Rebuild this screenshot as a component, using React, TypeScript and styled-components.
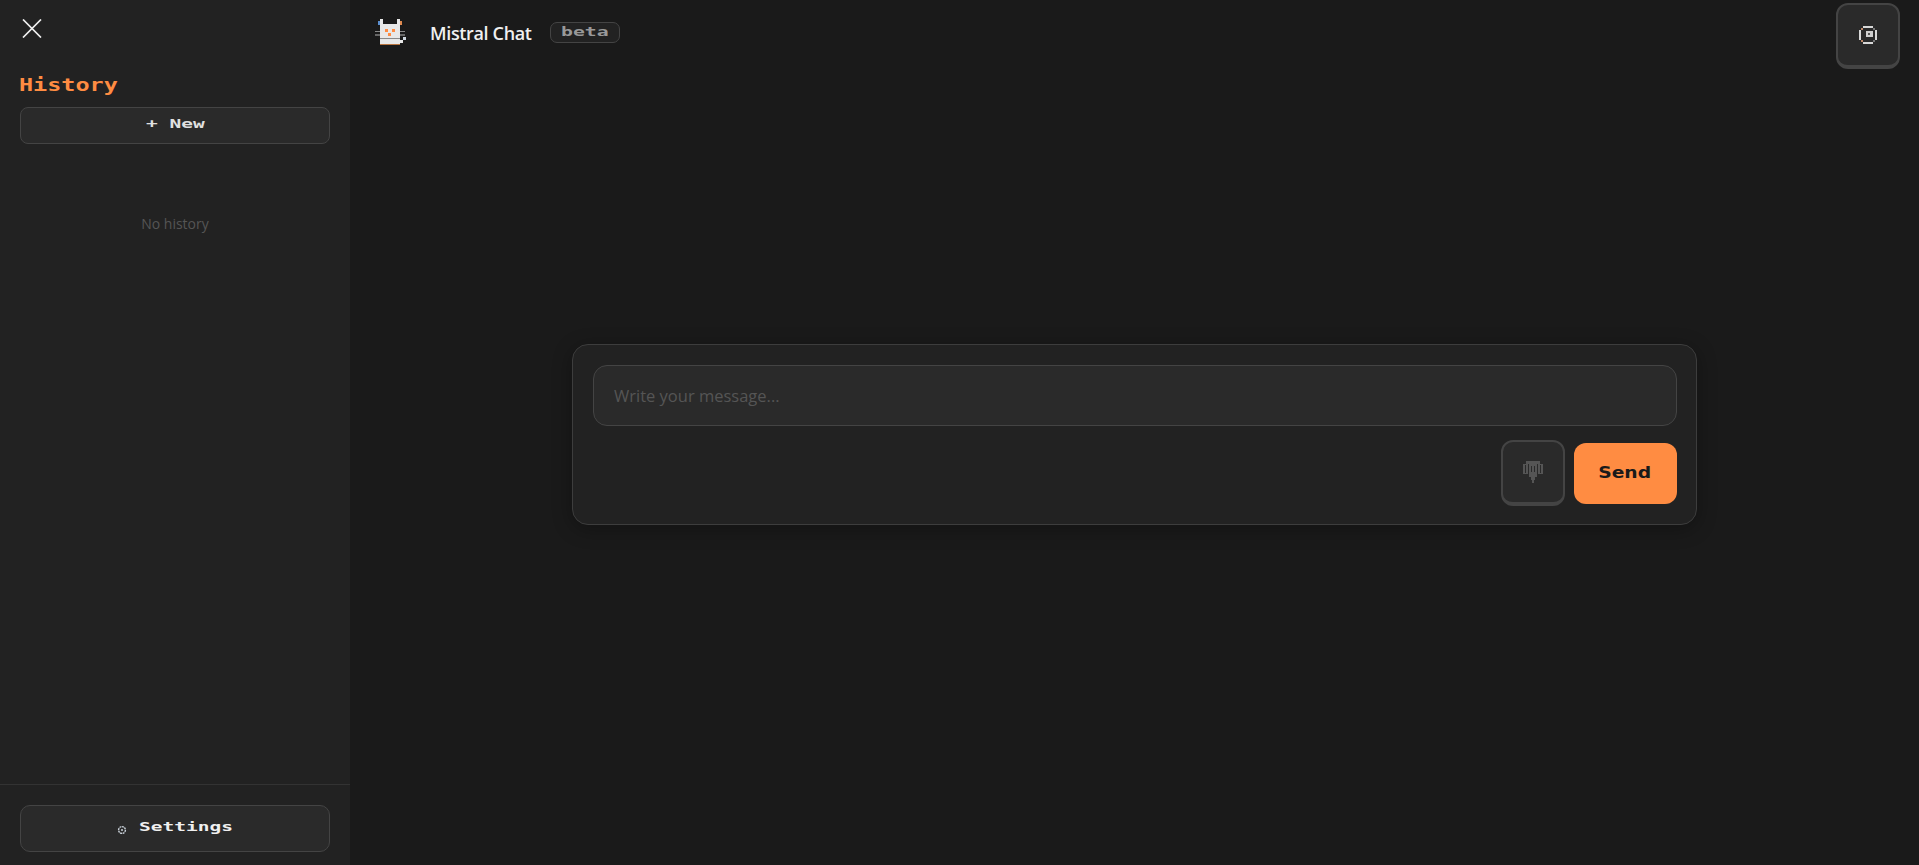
import React from 'react';
import styled, { createGlobalStyle } from 'styled-components';

const pixelFont = `"DejaVu Sans Mono", "Liberation Mono", monospace`;
const bodyFont = `"Open Sans", "Noto Sans", sans-serif`;

const GlobalStyle = createGlobalStyle`
  html, body {
    margin: 0;
    height: 100%;
    background: #1a1a1a;
  }
  * {
    box-sizing: border-box;
  }
`;

const Shell = styled.div`
  display: flex;
  width: 100%;
  height: 865px;
  overflow: hidden;
  font-family: ${bodyFont};
`;

const Sidebar = styled.aside`
  width: 350px;
  flex-shrink: 0;
  display: flex;
  flex-direction: column;
  background: #222222;
`;

const SidebarTop = styled.div`
  flex: 1;
  padding: 19px 20px 0;
  display: flex;
  flex-direction: column;
`;

const CloseButton = styled.button`
  width: 22px;
  height: 19px;
  margin-bottom: 36px;
  padding: 0;
  border: none;
  background: none;
  color: #f0f0f0;
  display: block;
`;

// wide bitmap-style lettering: a mono face stretched sideways
const PixelText = styled.span<{ $size: number; $stretch: number; $chars: number }>`
  display: inline-block;
  font-family: ${pixelFont};
  font-weight: 700;
  font-size: ${(p) => p.$size}px;
  transform: scaleX(${(p) => p.$stretch});
  transform-origin: left center;
  margin-right: calc(${(p) => p.$chars}ch * ${(p) => p.$stretch - 1});
  white-space: pre;
`;

const HistoryTitle = styled.h2`
  margin: 0 0 11px -1px;
  font-size: 17px;
  line-height: 22px;
  font-weight: 700;
  color: #ff8c42;
`;

const SideButton = styled.button<{ $tall?: boolean }>`
  width: 100%;
  height: ${(p) => (p.$tall ? '47px' : '37px')};
  display: flex;
  align-items: center;
  justify-content: center;
  gap: ${(p) => (p.$tall ? '12px' : '0')};
  background: #2a2a2a;
  border: 1px solid #444444;
  border-radius: ${(p) => (p.$tall ? '10px' : '8px')};
  color: ${(p) => (p.$tall ? '#f0f0f0' : '#e0e0e0')};
  padding: 0 0 4px;
`;

const EmptyNote = styled.p`
  margin: 70px 0 0;
  text-align: center;
  font-size: 14px;
  line-height: 20px;
  color: #555555;
`;

const SidebarBottom = styled.div`
  border-top: 1px solid #333333;
  padding: 20px 20px 13px;
`;

const Main = styled.main`
  flex: 1;
  display: flex;
  flex-direction: column;
  min-width: 0;
`;

const Header = styled.header`
  height: 69px;
  padding: 3px 19px 0 25px;
  display: flex;
  align-items: flex-start;
  justify-content: space-between;
`;

const Brand = styled.div`
  display: flex;
  align-items: center;
  height: 58px;
`;

const AppTitle = styled.h1`
  margin: 0 18px 0 24px;
  font-size: 18px;
  line-height: 24px;
  font-weight: 600;
  letter-spacing: -0.35px;
  color: #f0f0f0;
  position: relative;
  top: 1px;
`;

const BetaBadge = styled.span`
  width: 70px;
  height: 21px;
  display: flex;
  align-items: center;
  justify-content: center;
  border: 1px solid #444444;
  border-radius: 7px;
  background: #222222;
  color: #999999;
  padding-bottom: 1px;
`;

const KeyButton = styled.button`
  width: 64px;
  height: 66px;
  flex-shrink: 0;
  display: flex;
  align-items: center;
  justify-content: center;
  padding: 0;
  background: #2a2a2a;
  border: 2px solid #444444;
  border-bottom-width: 4px;
  border-radius: 12px;
`;

const Stage = styled.div`
  flex: 1;
  display: flex;
  align-items: center;
  justify-content: center;
  padding-bottom: 65px;
`;

const Composer = styled.form`
  width: 1125px;
  height: 181px;
  padding: 20px 19px 0 20px;
  display: flex;
  flex-direction: column;
  background: #222222;
  border: 1px solid #3d3d3d;
  border-radius: 16px;
  box-shadow: 0 4px 20px rgba(0, 0, 0, 0.3);
`;

const MessageInput = styled.input`
  width: 100%;
  height: 61px;
  flex-shrink: 0;
  padding: 0 20px;
  background: #2a2a2a;
  border: 1px solid #444444;
  border-radius: 14px;
  color: #f0f0f0;
  font-family: ${bodyFont};
  font-size: 16.5px;
  outline: none;

  &::placeholder {
    color: #555555;
    opacity: 1;
  }
`;

const Actions = styled.div`
  margin-top: 14px;
  display: flex;
  align-items: flex-start;
  justify-content: flex-end;
  gap: 9px;
`;

const SendButton = styled.button`
  width: 103px;
  height: 61px;
  margin-top: 3px;
  background: #ff8c42;
  border: none;
  border-radius: 12px;
  color: #1a1a1a;
  padding: 0 2px 2px 0;
`;

const SendLabel = styled.span`
  display: inline-block;
  font-family: "DejaVu Sans", sans-serif;
  font-weight: 700;
  font-size: 16px;
  transform: scaleX(1.17);
`;

function CatLogo() {
  const white = '#e8e8e8';
  return (
    <svg width="31" height="26" viewBox="0 0 31 26" shapeRendering="crispEdges" aria-hidden="true">
      <rect x="3" y="2" width="2" height="4" fill="#5b8fd0" />
      <rect x="5" y="0" width="3" height="6" fill={white} />
      <rect x="22" y="0" width="3" height="6" fill={white} />
      <rect x="25" y="2" width="2" height="4" fill="#e08a50" />
      <rect x="5" y="5" width="20" height="21" fill={white} />
      <rect x="5" y="25" width="20" height="1" fill="#b8743f" />
      <rect x="10" y="10" width="3" height="3" fill="#ff8c42" />
      <rect x="17" y="10" width="3" height="3" fill="#ff8c42" />
      <rect x="13" y="14" width="3" height="3" fill="#ff8c42" />
      <rect x="5" y="19" width="20" height="1" fill="#8a8a8a" />
      <rect x="0" y="12" width="5" height="1" fill="#888888" />
      <rect x="0" y="15" width="5" height="2" fill="#666666" />
      <rect x="25" y="12" width="5" height="1" fill="#888888" />
      <rect x="25" y="15" width="5" height="2" fill="#666666" />
      <rect x="22" y="21" width="6" height="3" fill={white} />
      <rect x="28" y="18" width="3" height="3" fill="#cfd8e0" />
    </svg>
  );
}

function TimerGlyph() {
  return (
    <svg width="18" height="18" viewBox="0 0 18 18" shapeRendering="crispEdges" aria-hidden="true">
      <rect x="4" y="0" width="10" height="2" fill="#d8d8d8" />
      <rect x="4" y="16" width="10" height="2" fill="#d8d8d8" />
      <rect x="0" y="4" width="2" height="10" fill="#d8d8d8" />
      <rect x="16" y="4" width="2" height="10" fill="#d8d8d8" />
      <rect x="2" y="2" width="2" height="2" fill="#c08a6a" />
      <rect x="2" y="14" width="2" height="2" fill="#c08a6a" />
      <rect x="14" y="2" width="2" height="2" fill="#777777" />
      <rect x="14" y="14" width="2" height="2" fill="#777777" />
      <rect x="7" y="5" width="7" height="6" fill="#cfcfcf" />
      <rect x="9" y="7" width="2" height="2" fill="#555555" />
    </svg>
  );
}

function MicGlyph() {
  return (
    <svg width="20" height="22" viewBox="0 0 20 22" shapeRendering="crispEdges" aria-hidden="true">
      <rect x="0" y="3" width="5" height="10" fill="#555555" />
      <rect x="15" y="3" width="5" height="10" fill="#555555" />
      <rect x="3" y="0" width="14" height="3" fill="#555555" />
      <rect x="6" y="3" width="8" height="13" fill="#555555" />
      <rect x="2" y="4" width="1" height="8" fill="#2a2a2a" />
      <rect x="17" y="4" width="1" height="8" fill="#2a2a2a" />
      <rect x="8" y="5" width="1" height="6" fill="#2a2a2a" />
      <rect x="11" y="5" width="1" height="6" fill="#2a2a2a" />
      <rect x="8" y="16" width="4" height="3" fill="#555555" />
      <rect x="9" y="19" width="2" height="3" fill="#555555" />
    </svg>
  );
}

const GearIcon = styled.svg`
  margin-top: 6px;
`;

function GearGlyph() {
  return (
    <GearIcon width="10" height="10" viewBox="0 0 10 10" fill="none" aria-hidden="true">
      <circle cx="5" cy="5" r="3.4" stroke="#c8d0d8" strokeWidth="1.4" strokeDasharray="2 0.6" />
      <circle cx="5" cy="5" r="1" fill="#c8d0d8" />
    </GearIcon>
  );
}

export default function App() {
  return (
    <Shell>
      <GlobalStyle />
      <Sidebar>
        <SidebarTop>
          <CloseButton type="button" aria-label="Close">
            <svg width="22" height="19" viewBox="0 0 22 19" fill="none" stroke="currentColor" strokeWidth="1.7">
              <path d="M3 0.5 21 18.5M21 0.5 3 18.5" />
            </svg>
          </CloseButton>
          <HistoryTitle>
            <PixelText $size={17} $stretch={1.38} $chars={7}>History</PixelText>
          </HistoryTitle>
          <SideButton type="button">
            <PixelText $size={13} $stretch={1.5} $chars={5}>+ New</PixelText>
          </SideButton>
          <EmptyNote>No history</EmptyNote>
        </SidebarTop>
        <SidebarBottom>
          <SideButton type="button" $tall>
            <GearGlyph />
            <PixelText $size={13} $stretch={1.5} $chars={8}>Settings</PixelText>
          </SideButton>
        </SidebarBottom>
      </Sidebar>
      <Main>
        <Header>
          <Brand>
            <CatLogo />
            <AppTitle>Mistral Chat</AppTitle>
            <BetaBadge>
              <PixelText $size={12} $stretch={1.65} $chars={4}>beta</PixelText>
            </BetaBadge>
          </Brand>
          <KeyButton type="button" aria-label="Timer">
            <TimerGlyph />
          </KeyButton>
        </Header>
        <Stage>
          <Composer onSubmit={(e) => e.preventDefault()}>
            <MessageInput placeholder="Write your message..." />
            <Actions>
              <KeyButton type="button" aria-label="Voice">
                <MicGlyph />
              </KeyButton>
              <SendButton type="submit">
                <SendLabel>Send</SendLabel>
              </SendButton>
            </Actions>
          </Composer>
        </Stage>
      </Main>
    </Shell>
  );
}
